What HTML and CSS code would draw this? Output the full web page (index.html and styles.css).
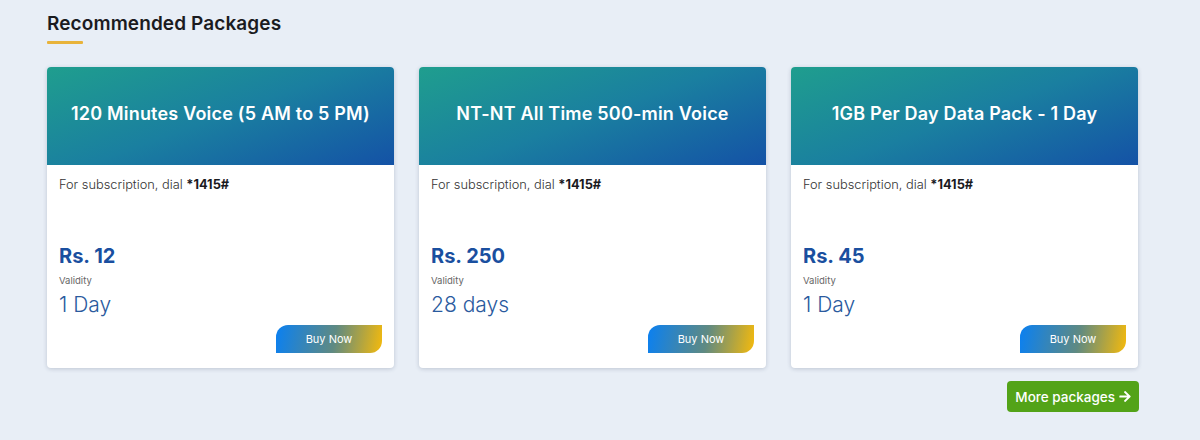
FILE: index.html
```html
<!DOCTYPE html>
<html>
<head>
<meta charset="utf-8">
<link rel="stylesheet" href="styles.css">
</head>
<body>
<section class="wrap">
  <h2 class="title">Recommended Packages</h2>
  <div class="bar"></div>
  <div class="grid">
    <div class="card">
      <div class="head"><h3>120 Minutes Voice (5 AM to 5 PM)</h3></div>
      <div class="body">
        <p class="dial">For subscription, dial <b>*1415#</b></p>
        <div class="price">Rs. 12</div>
        <div class="vlabel">Validity</div>
        <div class="vval">1 Day</div>
        <div class="actions"><a class="buy">Buy Now</a></div>
      </div>
    </div>
    <div class="card">
      <div class="head"><h3>NT-NT All Time 500-min Voice</h3></div>
      <div class="body">
        <p class="dial">For subscription, dial <b>*1415#</b></p>
        <div class="price">Rs. 250</div>
        <div class="vlabel">Validity</div>
        <div class="vval">28 days</div>
        <div class="actions"><a class="buy">Buy Now</a></div>
      </div>
    </div>
    <div class="card">
      <div class="head"><h3>1GB Per Day Data Pack - 1 Day</h3></div>
      <div class="body">
        <p class="dial">For subscription, dial <b>*1415#</b></p>
        <div class="price">Rs. 45</div>
        <div class="vlabel">Validity</div>
        <div class="vval">1 Day</div>
        <div class="actions"><a class="buy">Buy Now</a></div>
      </div>
    </div>
  </div>
  <div class="more-row">
    <a class="more">More packages <svg class="arrow" viewBox="0 0 448 512" width="12" height="13"><path fill="#fff" d="M190.5 66.9l22.2-22.2c9.4-9.4 24.6-9.4 33.9 0L441 239c9.4 9.4 9.4 24.6 0 33.9L246.6 467.3c-9.4 9.4-24.6 9.4-33.9 0l-22.2-22.2c-9.5-9.5-9.3-25 .4-34.3L311.4 296H24c-13.3 0-24-10.7-24-24v-32c0-13.3 10.7-24 24-24h287.4L190.9 101.2c-9.8-9.300-10-24.8-.4-34.3z"/></svg></a>
  </div>
</section>
</body>
</html>
```
FILE: styles.css
```css
html, body { margin: 0; padding: 0; }
body {
  background: #e8eef6;
  font-family: Inter, "Noto Sans", "Liberation Sans", sans-serif;
  width: 1200px;
  height: 440px;
  overflow: hidden;
}
.wrap {
  width: 1092px;
  margin: 0 0 0 47px;
  padding-top: 12px;
}
.title {
  margin: 0;
  font-size: 19px;
  font-weight: 600;
  color: #1b1b1f;
  line-height: 24px;
  letter-spacing: 0.1px;
}
.bar {
  width: 36px;
  height: 3px;
  background: #e8b33a;
  margin-top: 5px;
  border-radius: 1px;
}
.grid {
  display: grid;
  grid-template-columns: repeat(3, 347px);
  column-gap: 25px;
  margin-top: 23px;
}
.card {
  background: #fff;
  border-radius: 4px;
  box-shadow: 0 1px 4px rgba(40, 60, 90, 0.22);
  overflow: hidden;
  display: flex;
  flex-direction: column;
  height: 301px;
}
.head {
  height: 98px;
  background: linear-gradient(160deg, #1f9e8e 0%, #1a7fa0 50%, #1452a6 100%);
  display: flex;
  align-items: center;
  justify-content: center;
}
.head h3 {
  margin: 0 0 6px 0;
  color: #fff;
  font-size: 18px;
  font-weight: 600;
  letter-spacing: 0.2px;
  text-align: center;
}
.body {
  padding: 12px 12px 15px 12px;
  display: flex;
  flex-direction: column;
  flex: 1;
}
.dial {
  margin: 0;
  font-size: 12.8px;
  color: #333;
  font-weight: 300;
  line-height: 16px;
}
.dial b { font-weight: 700; color: #1b1b1f; }
.price {
  margin-top: 50px;
  font-size: 20px;
  font-weight: 700;
  color: #1a4f9f;
  line-height: 26px;
}
.vlabel {
  font-size: 9.5px;
  color: #666;
  margin-top: 6px;
  line-height: 12px;
}
.vval {
  font-size: 21px;
  font-weight: 300;
  color: #2a5a9e;
  line-height: 28px;
  margin-top: 4px;
}
.actions {
  margin-top: auto;
  display: flex;
  justify-content: flex-end;
}
.buy {
  width: 106px;
  height: 28px;
  display: flex;
  align-items: center;
  justify-content: center;
  color: #fff;
  font-size: 11px;
  background: linear-gradient(100deg, #0a80f2 0%, #5f8a82 55%, #f5ba0c 100%);
  border-radius: 12px 0 12px 0;
}
.more-row {
  display: flex;
  justify-content: flex-end;
  margin-top: 13px;
}
.more {
  background: #53a318;
  color: #fff;
  font-size: 13.5px;
  font-weight: 500;
  height: 31px;
  padding: 0 8px;
  border-radius: 4px;
  display: flex;
  align-items: center;
  gap: 4px;
}
.arrow { display: block; }
```
